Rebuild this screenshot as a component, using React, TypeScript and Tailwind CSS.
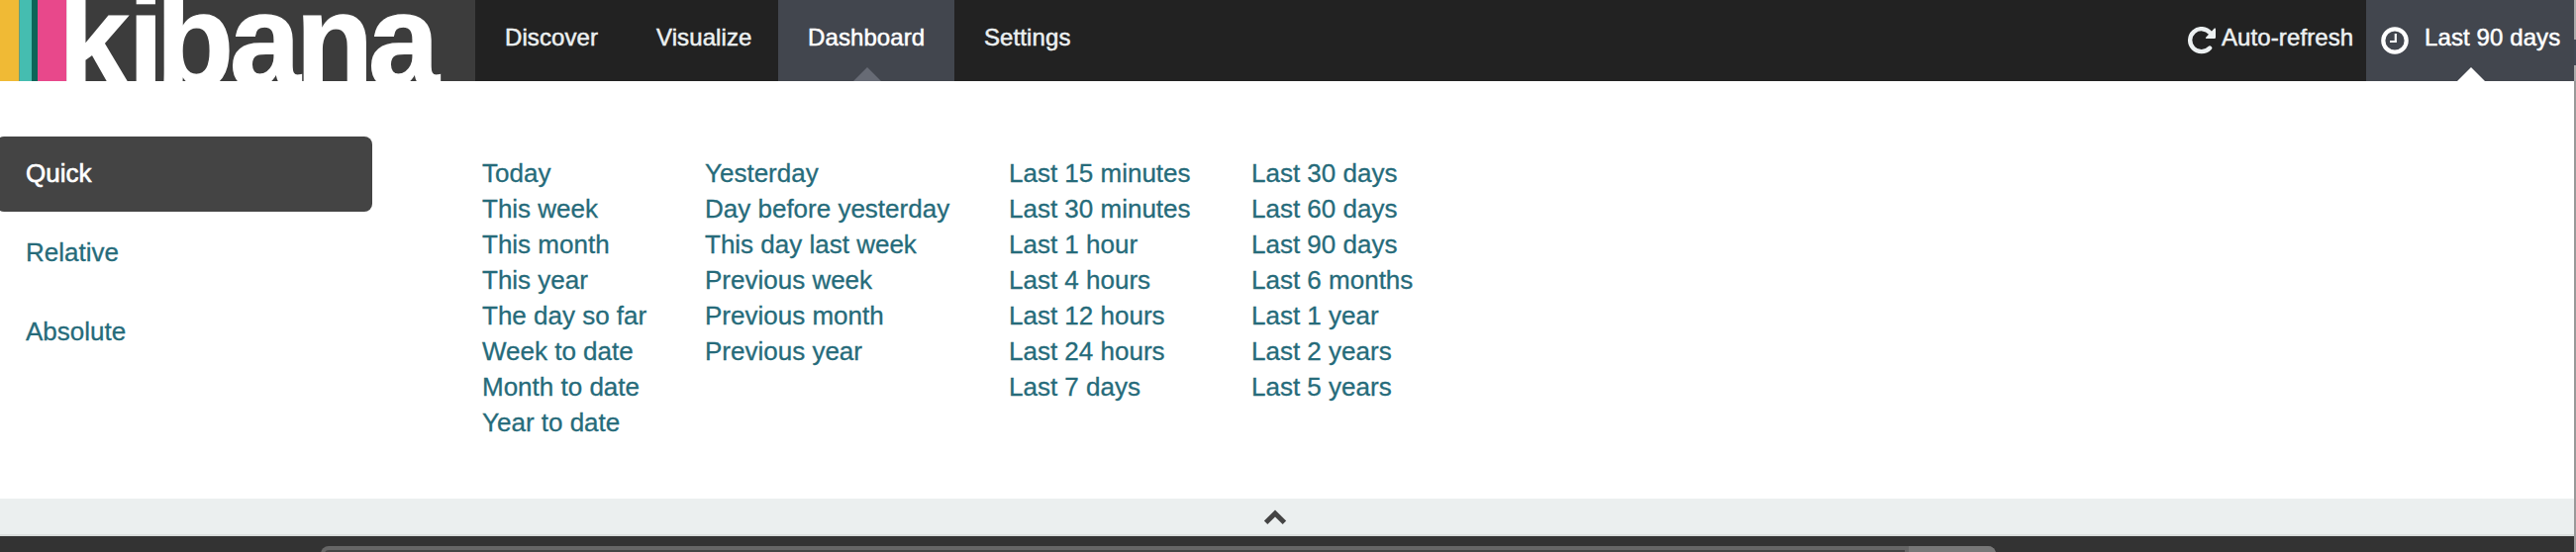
const columns = [
  { width: "w-[225px]", items: ["Today", "This week", "This month", "This year", "The day so far", "Week to date", "Month to date", "Year to date"] },
  { width: "w-[307px]", items: ["Yesterday", "Day before yesterday", "This day last week", "Previous week", "Previous month", "Previous year"] },
  { width: "w-[245px]", items: ["Last 15 minutes", "Last 30 minutes", "Last 1 hour", "Last 4 hours", "Last 12 hours", "Last 24 hours", "Last 7 days"] },
  { width: "w-[245px]", items: ["Last 30 days", "Last 60 days", "Last 90 days", "Last 6 months", "Last 1 year", "Last 2 years", "Last 5 years"] },
];

function Logo() {
  return (
    <svg className="h-[82px] w-[480px] shrink-0" viewBox="0 0 480 82">
      <rect width="480" height="82" fill="#3c3c3c" />
      <rect width="19.5" height="82" fill="#f0ba35" />
      <rect x="19.5" width="13" height="82" fill="#45bdb0" />
      <rect x="32" width="6" height="82" fill="#0c6558" />
      <rect x="38" width="29.5" height="82" fill="#e8488b" />
      <text
        x="61.5 134.9 164 241.7 311 387.5"
        y="86.5"
        transform="scale(0.96 1)"
        fill="#fff"
        stroke="#fff"
        strokeWidth="1.6"
        fontSize="134"
        fontWeight="700"
        fontFamily="'Liberation Sans', sans-serif"
      >
        kibana
      </text>
    </svg>
  );
}

function NavBar() {
  return (
    <header className="flex h-[82px] bg-[#222222] text-[24px] tracking-[0.1px] text-[#ecf0f1] [-webkit-text-stroke:0.5px]">
      <Logo />
      <nav className="flex flex-1 leading-[76px]">
        <a className="w-[153px] pl-[30px]">Discover</a>
        <a className="w-[153px] pl-[30px]">Visualize</a>
        <a className="relative w-[178px] bg-[#42464e] pl-[30px] text-white">
          Dashboard
          <svg className="absolute bottom-0 left-[76px] h-[14px] w-[28px]" viewBox="0 0 28 14">
            <path d="M0 14L14 0L28 14Z" fill="#676b75" />
          </svg>
        </a>
        <a className="w-[153px] pl-[30px]">Settings</a>
      </nav>
      <a className="flex w-[180px] leading-[76px]">
        <svg className="mt-[27px] h-[28px] w-[28px] shrink-0" viewBox="0 0 28 28">
          <path d="M22.1 21.5A11.5 11.5 0 1 1 22.6 6.4" fill="none" stroke="#ecf0f1" strokeWidth="4.4" strokeLinecap="round" />
          <path d="M26.8 1.6Q28 1 28 2.4V10.8Q28 12 26.8 12H18.6Q17.2 12 18.2 10.8Z" fill="#ecf0f1" />
        </svg>
        <span className="ml-[6px] whitespace-nowrap">Auto-refresh</span>
      </a>
      <a className="relative flex w-[210px] bg-[#42464e] leading-[76px] text-white">
        <svg className="ml-[15px] mt-[27px] h-[28px] w-[28px] shrink-0" viewBox="0 0 28 28" fill="none" stroke="#fff">
          <circle cx="14" cy="14" r="11.7" strokeWidth="4.2" />
          <path d="M14.8 7V15H9" strokeWidth="2.2" />
        </svg>
        <span className="ml-[16px] whitespace-nowrap">Last 90 days</span>
        <svg className="absolute bottom-0 left-[92px] h-[14px] w-[28px]" viewBox="0 0 28 14">
          <path d="M0 14L14 0L28 14Z" fill="#fff" />
        </svg>
      </a>
      <div className="flex w-[2px] flex-col bg-[#aaaaaa]">
        <div className="mt-[40px] h-[26px] bg-[#444a55]" />
      </div>
    </header>
  );
}

export default function App() {
  return (
    <div className="h-[558px] w-[2602px] overflow-hidden bg-white font-['Liberation_Sans',sans-serif] text-[26px] leading-[36px]">
      <NavBar />
      <div className="border-r-2 border-[#999999]">
        <main className="flex h-[422px] bg-white pt-[56px] text-[#266b7a] [-webkit-text-stroke:0.3px]">
          <ul className="w-[376px] shrink-0 leading-[74px]">
            <li className="-ml-[4px] mb-[4px] h-[76px] rounded-[8px] bg-[#444444] pl-[30px] text-white [-webkit-text-stroke:0.6px]">Quick</li>
            <li className="mb-[4px] h-[76px] pl-[26px]">Relative</li>
            <li className="h-[76px] pl-[26px]">Absolute</li>
          </ul>
          <div className="ml-[111px] mt-[19px] flex">
            {columns.map((c) => (
              <ul key={c.items[0]} className={c.width}>
                {c.items.map((i) => (
                  <li key={i}>{i}</li>
                ))}
              </ul>
            ))}
          </div>
        </main>
        <div className="flex h-[38px] justify-center border-b-2 border-[#d9dddc] bg-[#ebefef] pt-[11px] pr-[24px]">
          <svg className="h-[16px] w-[24px]" viewBox="0 0 24 16">
            <path d="M2.6 13.2L12 4L21.4 13.2" fill="none" stroke="#444" strokeWidth="5" />
          </svg>
        </div>
        <footer className="flex h-[16px] bg-[#333333] pl-[324px] pt-[10px]">
          <div className="flex h-[20px] w-[1692px] overflow-hidden rounded-t-[8px] bg-[#666666]">
            <div className="ml-[4px] mt-[4px] h-4 flex-1 rounded-tl-[4px] bg-[#444444]" />
            <div className="ml-1 w-[88px] bg-[#777777]" />
          </div>
        </footer>
      </div>
    </div>
  );
}
